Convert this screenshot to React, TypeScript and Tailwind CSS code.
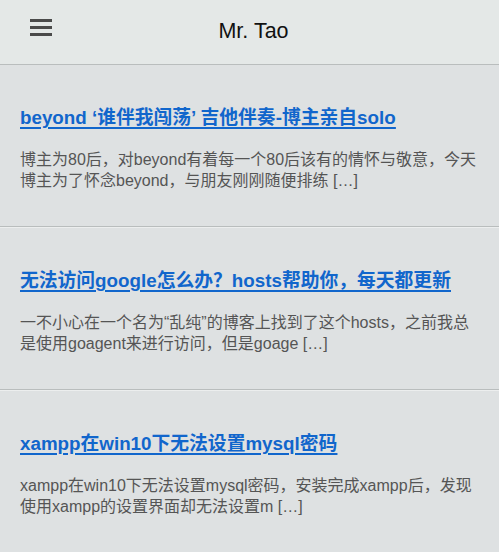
import React from "react";

type Post = { title: string; excerpt: string };

const posts: Post[] = [
  {
    title: "beyond ‘谁伴我闯荡’ 吉他伴奏-博主亲自solo",
    excerpt:
      "博主为80后，对beyond有着每一个80后该有的情怀与敬意，今天博主为了怀念beyond，与朋友刚刚随便排练 […]",
  },
  {
    title: "无法访问google怎么办？hosts帮助你，每天都更新",
    excerpt:
      "一不小心在一个名为“乱纯”的博客上找到了这个hosts，之前我总是使用goagent来进行访问，但是goage […]",
  },
  {
    title: "xampp在win10下无法设置mysql密码",
    excerpt:
      "xampp在win10下无法设置mysql密码，安装完成xampp后，发现使用xampp的设置界面却无法设置m […]",
  },
];

const App: React.FC = () => {
  return (
    <div
      className="min-h-[552px] w-full bg-[#dee1e2]"
      style={{ fontFamily: '"Liberation Sans", "Noto Sans CJK SC", sans-serif' }}
    >
      <header className="relative flex h-[65px] items-center justify-center border-b border-[#b9bdbd] bg-[#e4e8e7]">
        <button type="button" className="absolute left-[30px] top-[19px] flex w-[22px] flex-col gap-[4px]">
          <span className="block h-[3px] w-full bg-[#4a4a4a]" />
          <span className="block h-[3px] w-full bg-[#4a4a4a]" />
          <span className="block h-[3px] w-full bg-[#4a4a4a]" />
        </button>
        <h1 className="-mt-[1px] ml-[8px] text-[21.5px] text-[#111]">Mr. Tao</h1>
      </header>

      <main>
        {posts.map((p) => (
          <article
            key={p.title}
            className="border-t border-[#eceeee] border-b border-b-[#b9bdbd] px-5 pt-[39px] pb-[35px] first:border-t-0"
          >
            <h3 className="text-[18.8px] font-bold leading-[28px] text-[#1166cc] underline decoration-[2px] underline-offset-[3px]">
              <a href="#">{p.title}</a>
            </h3>
            <p className="mt-[17px] text-[16px] leading-[21px] text-[#555]">{p.excerpt}</p>
          </article>
        ))}
      </main>
    </div>
  );
};

export default App;
